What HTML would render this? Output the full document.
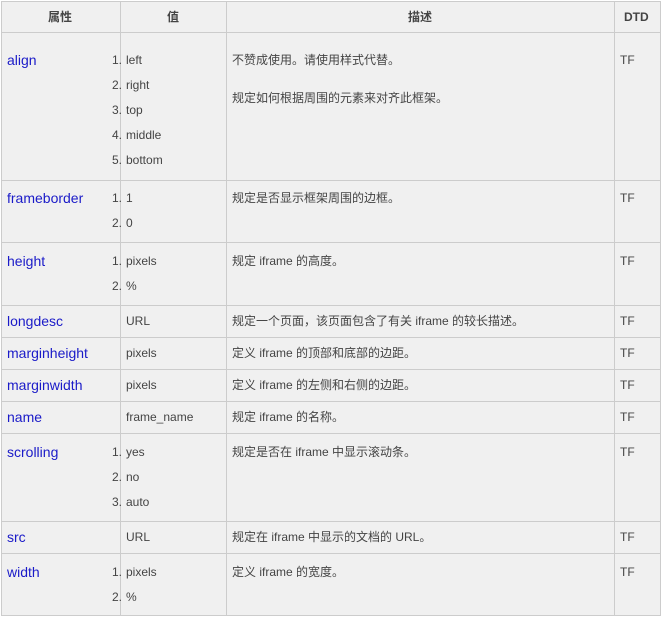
<!DOCTYPE html>
<html><head><meta charset="utf-8"><style>
html,body{margin:0;padding:0;background:#fff;width:662px;height:619px;overflow:hidden}
#t{position:absolute;left:1px;top:1px;width:660px;height:615px;background:#f0f0f0;border:1px solid #ccc;box-sizing:border-box}
.v{position:absolute;top:1px;width:1px;height:615px;background:#ccc}
.h{position:absolute;left:1px;width:660px;height:1px;background:#ccc}
.s{position:absolute;line-height:16px;white-space:nowrap;font-family:"Liberation Sans","Noto Sans CJK SC",sans-serif;font-size:12px;color:#444}
.n{color:#1a1ac8;font-size:14px}
.hd{font-weight:bold;color:#444}
.num{text-align:right;width:20px}
</style></head><body>
<div id="t"></div>
<div class="v" style="left:120px"></div>
<div class="v" style="left:226px"></div>
<div class="v" style="left:614px"></div>
<div class="h" style="top:32px"></div>
<div class="h" style="top:180px"></div>
<div class="h" style="top:242px"></div>
<div class="h" style="top:305px"></div>
<div class="h" style="top:337px"></div>
<div class="h" style="top:369px"></div>
<div class="h" style="top:401px"></div>
<div class="h" style="top:433px"></div>
<div class="h" style="top:521px"></div>
<div class="h" style="top:553px"></div>

<div class="s hd" style="left:48px;top:9px">属性</div>
<div class="s hd" style="left:167px;top:9px">值</div>
<div class="s hd" style="left:408px;top:9px">描述</div>
<div class="s hd" style="left:624px;top:9px">DTD</div>

<!-- align -->
<div class="s n" style="left:7px;top:52px">align</div>
<div class="s num" style="left:102px;top:52px">1.</div><div class="s" style="left:126px;top:52px">left</div>
<div class="s num" style="left:102px;top:77px">2.</div><div class="s" style="left:126px;top:77px">right</div>
<div class="s num" style="left:102px;top:102px">3.</div><div class="s" style="left:126px;top:102px">top</div>
<div class="s num" style="left:102px;top:127px">4.</div><div class="s" style="left:126px;top:127px">middle</div>
<div class="s num" style="left:102px;top:152px">5.</div><div class="s" style="left:126px;top:152px">bottom</div>
<div class="s" style="left:232px;top:52px">不赞成使用。请使用样式代替。</div>
<div class="s" style="left:232px;top:90px">规定如何根据周围的元素来对齐此框架。</div>
<div class="s" style="left:620px;top:52px">TF</div>

<!-- frameborder -->
<div class="s n" style="left:7px;top:190px">frameborder</div>
<div class="s num" style="left:102px;top:190px">1.</div><div class="s" style="left:126px;top:190px">1</div>
<div class="s num" style="left:102px;top:215px">2.</div><div class="s" style="left:126px;top:215px">0</div>
<div class="s" style="left:232px;top:190px">规定是否显示框架周围的边框。</div>
<div class="s" style="left:620px;top:190px">TF</div>

<!-- height -->
<div class="s n" style="left:7px;top:253px">height</div>
<div class="s num" style="left:102px;top:253px">1.</div><div class="s" style="left:126px;top:253px">pixels</div>
<div class="s num" style="left:102px;top:278px">2.</div><div class="s" style="left:126px;top:278px">%</div>
<div class="s" style="left:232px;top:253px">规定 iframe 的高度。</div>
<div class="s" style="left:620px;top:253px">TF</div>

<div class="s n" style="left:7px;top:313px">longdesc</div>
<div class="s" style="left:126px;top:313px">URL</div>
<div class="s" style="left:232px;top:313px">规定一个页面，该页面包含了有关 iframe 的较长描述。</div>
<div class="s" style="left:620px;top:313px">TF</div>

<div class="s n" style="left:7px;top:345px">marginheight</div>
<div class="s" style="left:126px;top:345px">pixels</div>
<div class="s" style="left:232px;top:345px">定义 iframe 的顶部和底部的边距。</div>
<div class="s" style="left:620px;top:345px">TF</div>

<div class="s n" style="left:7px;top:377px">marginwidth</div>
<div class="s" style="left:126px;top:377px">pixels</div>
<div class="s" style="left:232px;top:377px">定义 iframe 的左侧和右侧的边距。</div>
<div class="s" style="left:620px;top:377px">TF</div>

<div class="s n" style="left:7px;top:409px">name</div>
<div class="s" style="left:126px;top:409px">frame_name</div>
<div class="s" style="left:232px;top:409px">规定 iframe 的名称。</div>
<div class="s" style="left:620px;top:409px">TF</div>

<!-- scrolling -->
<div class="s n" style="left:7px;top:444px">scrolling</div>
<div class="s num" style="left:102px;top:444px">1.</div><div class="s" style="left:126px;top:444px">yes</div>
<div class="s num" style="left:102px;top:469px">2.</div><div class="s" style="left:126px;top:469px">no</div>
<div class="s num" style="left:102px;top:494px">3.</div><div class="s" style="left:126px;top:494px">auto</div>
<div class="s" style="left:232px;top:444px">规定是否在 iframe 中显示滚动条。</div>
<div class="s" style="left:620px;top:444px">TF</div>

<div class="s n" style="left:7px;top:529px">src</div>
<div class="s" style="left:126px;top:529px">URL</div>
<div class="s" style="left:232px;top:529px">规定在 iframe 中显示的文档的 URL。</div>
<div class="s" style="left:620px;top:529px">TF</div>

<!-- width -->
<div class="s n" style="left:7px;top:564px">width</div>
<div class="s num" style="left:102px;top:564px">1.</div><div class="s" style="left:126px;top:564px">pixels</div>
<div class="s num" style="left:102px;top:589px">2.</div><div class="s" style="left:126px;top:589px">%</div>
<div class="s" style="left:232px;top:564px">定义 iframe 的宽度。</div>
<div class="s" style="left:620px;top:564px">TF</div>
</body></html>
